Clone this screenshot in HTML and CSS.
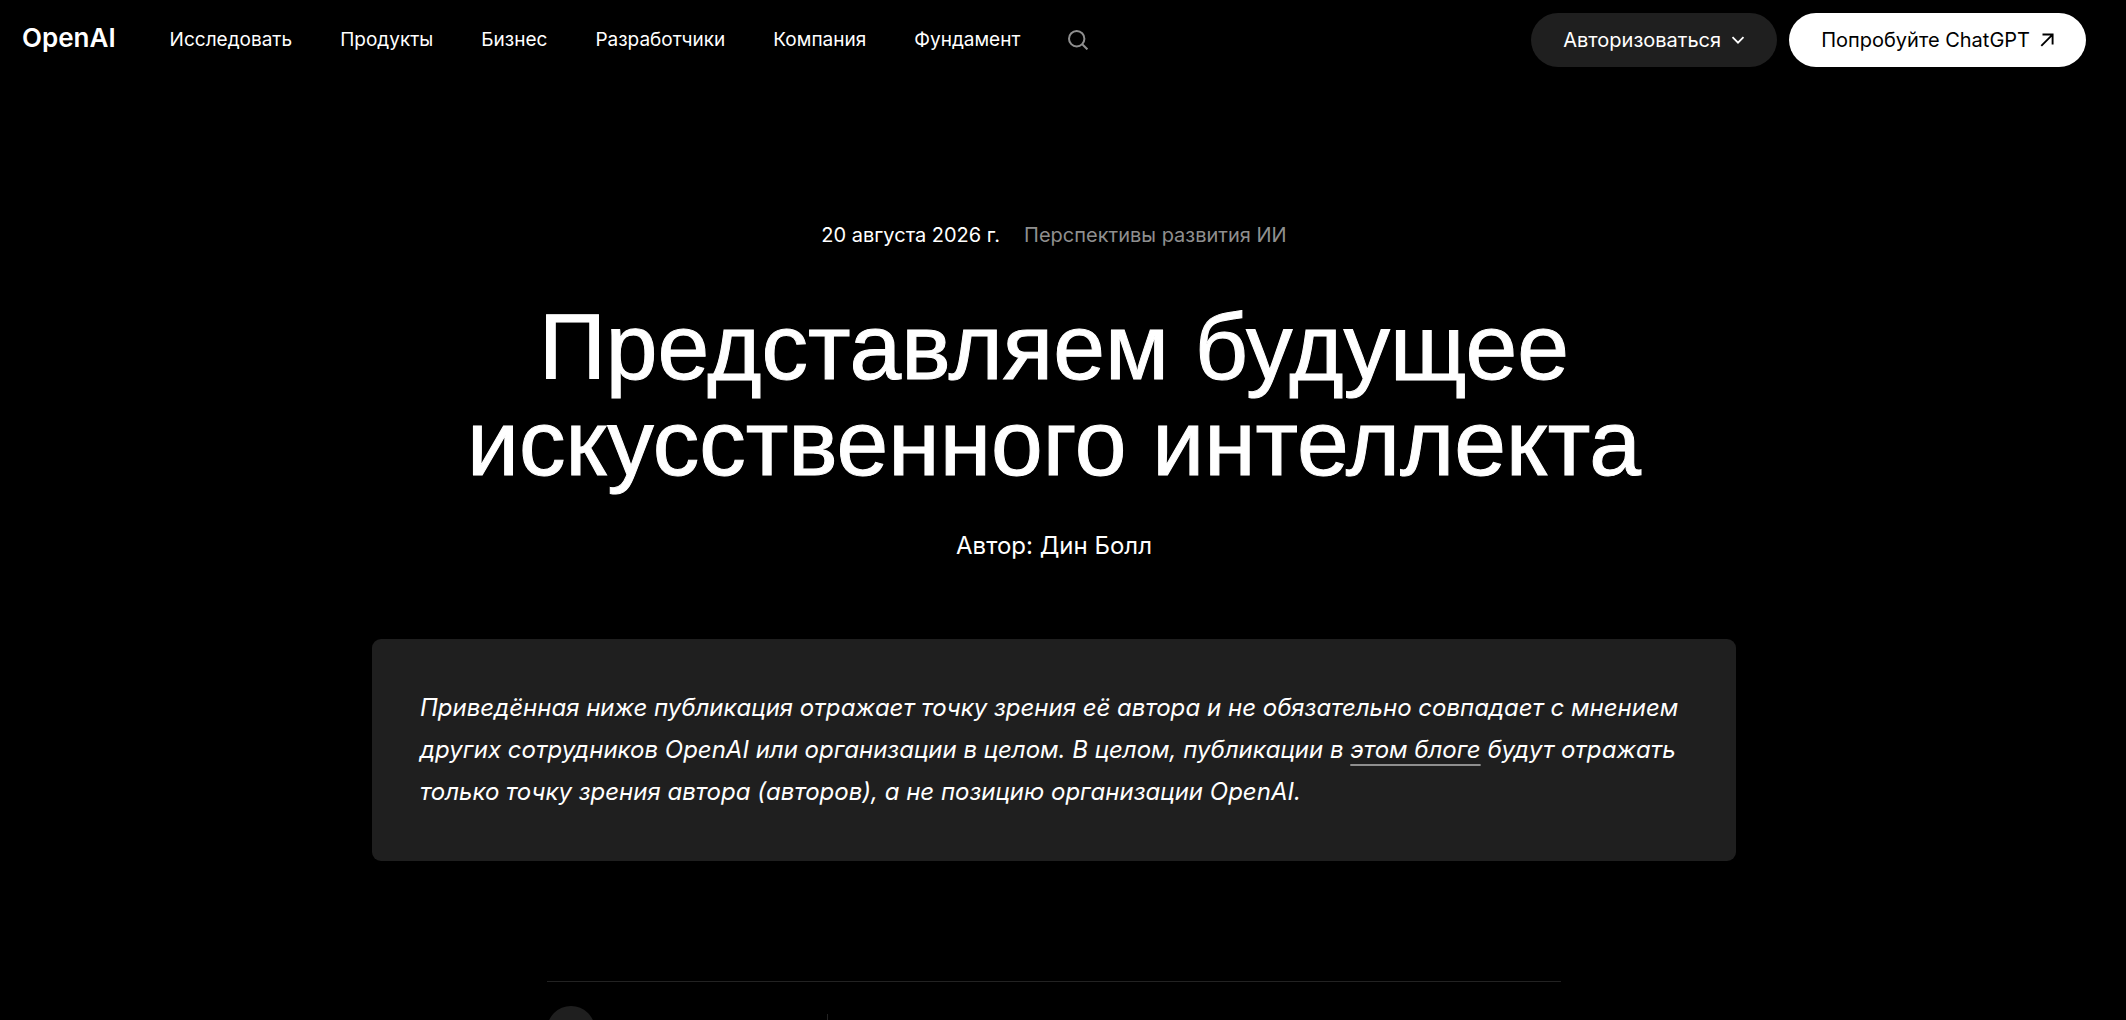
FILE: index.html
```html
<!DOCTYPE html>
<html lang="ru">
<head>
<meta charset="utf-8">
<meta name="viewport" content="width=device-width, initial-scale=1">
<title>Представляем будущее искусственного интеллекта | OpenAI</title>
<link rel="stylesheet" href="styles.css">
</head>
<body>
<header class="header">
  <a class="logo" href="#">OpenAI</a>
  <nav class="nav">
    <a href="#">Исследовать</a>
    <a href="#">Продукты</a>
    <a href="#">Бизнес</a>
    <a href="#">Разработчики</a>
    <a href="#">Компания</a>
    <a href="#">Фундамент</a>
    <button class="search" type="button" aria-label="Поиск">
      <svg width="20" height="20" viewBox="0 0 20 20" fill="none" stroke="currentColor" stroke-width="2"><circle cx="8.700" cy="8.700" r="7.700"/><path d="M14 14 19.400 19.400"/></svg>
    </button>
  </nav>
  <div class="actions">
    <button class="pill pill-dark" type="button">Авторизоваться
      <svg width="14" height="14" viewBox="0 0 14 14" fill="none" stroke="currentColor" stroke-width="1.800"><path d="M1.500 4.200 7 9.700 12.500 4.200"/></svg>
    </button>
    <a class="pill pill-light" href="#">Попробуйте ChatGPT
      <svg width="14" height="14" viewBox="0 0 14 14" fill="none" stroke="currentColor" stroke-width="1.900"><path d="M1.300 12.800 12.500 1.600M2.500 1.500H12.600V11.500"/></svg>
    </a>
  </div>
</header>
<main class="article">
  <div class="meta">
    <time datetime="2026-08-20">20 августа 2026 г.</time>
    <a href="#">Перспективы развития ИИ</a>
  </div>
  <h1 class="title">Представляем будущее искусственного интеллекта</h1>
  <p class="author">Автор: Дин Болл</p>
  <aside class="note">
    <p>Приведённая ниже публикация отражает точку зрения её автора и не обязательно совпадает с мнением других сотрудников OpenAI или организации в целом. В целом, публикации в <a href="#">этом блоге</a> будут отражать только точку зрения автора (авторов), а не позицию организации OpenAI.</p>
  </aside>
  <section class="player">
    <button class="play" type="button" aria-label="Прослушать статью"></button>
    <span class="separator"></span>
  </section>
</main>
</body>
</html>
```
FILE: styles.css
```css
* {
  box-sizing: border-box;
}

body {
  margin: 0;
  padding-right: 18px;
  height: 100vh;
  overflow: hidden;
  background: #000;
  color: #fff;
  font-family: Inter, "Liberation Sans", sans-serif;
  font-size: 20px;
  line-height: 28px;
}

a {
  color: inherit;
  text-decoration: none;
}

button {
  border: 0;
  padding: 0;
  background: none;
  color: inherit;
  font: inherit;
  cursor: pointer;
}

h1,
p {
  margin: 0;
}

svg {
  display: block;
}

.header {
  display: flex;
  align-items: center;
  height: 80px;
  padding: 0 22px;
}

.logo {
  font-size: 26px;
  font-weight: 600;
  padding-bottom: 4px;
}

.nav {
  display: flex;
  align-items: center;
  gap: 48px;
  margin-left: 54px;
  font-size: 19px;
}

.search {
  color: #8f8f8f;
}

.actions {
  display: flex;
  gap: 12px;
  margin-left: auto;
}

.pill {
  display: flex;
  align-items: center;
  gap: 10px;
  height: 54px;
  padding: 0 32px;
  border-radius: 27px;
}

.pill-dark {
  background: #1f1f1f;
}

.pill-light {
  background: #fff;
  color: #000;
}

.article {
  display: flex;
  flex-direction: column;
  align-items: center;
  padding: 141px 24px 0;
}

.meta {
  display: flex;
  gap: 24px;
}

.meta a {
  color: #8f8f8f;
}

.title {
  max-width: 1364px;
  margin-top: 50px;
  font-family: "Liberation Sans", Arial, sans-serif;
  font-size: 93px;
  font-weight: 400;
  line-height: 96px;
  text-align: center;
  text-wrap: balance;
  -webkit-text-stroke: 1px currentColor;
}

.author {
  margin-top: 39px;
  font-size: 24px;
  line-height: 32px;
}

.note {
  width: 100%;
  max-width: 1364px;
  margin-top: 77px;
  padding: 48px;
  border-radius: 9px;
  background: #1f1f1f;
  font-size: 24px;
  font-style: italic;
  line-height: 42px;
}

.note a {
  text-decoration: underline;
  text-decoration-color: #8f8f8f;
  text-decoration-thickness: 2px;
  text-decoration-skip-ink: none;
  text-underline-offset: 6px;
}

.player {
  display: flex;
  gap: 232px;
  width: 100%;
  max-width: 1014px;
  margin-top: 120px;
  padding-top: 24px;
  border-top: 1px solid #222;
}

.play {
  width: 48px;
  height: 48px;
  border-radius: 50%;
  background: #1f1f1f;
}

.separator {
  width: 1px;
  height: 32px;
  margin-top: 8px;
  background: #222;
}
```
